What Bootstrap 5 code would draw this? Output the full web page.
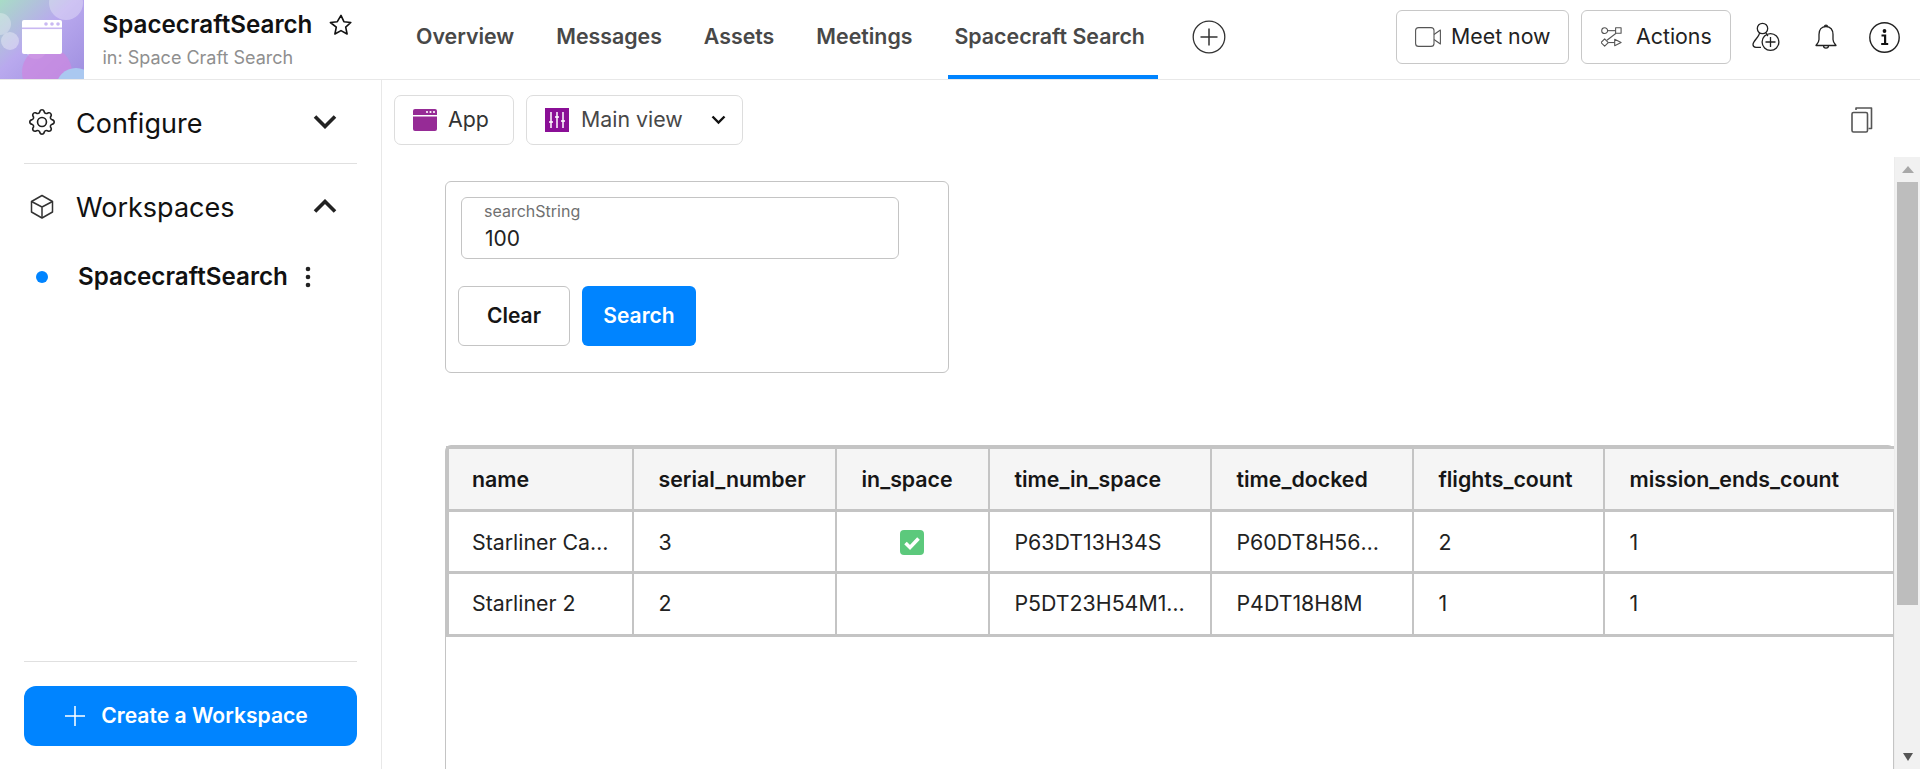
<!DOCTYPE html>
<html lang="en">
<head>
<meta charset="utf-8">
<title>SpacecraftSearch</title>
<link rel="stylesheet" href="https://cdn.jsdelivr.net/npm/bootstrap@5.3.0/dist/css/bootstrap.min.css">
<style>
html,body{height:100%;overflow:hidden}
body{font-family:Inter,"Liberation Sans",sans-serif;color:#1a1a1a;background:#fff}
svg{display:block;flex:none}
.shell{height:769px}
.topbar{height:80px;border-bottom:1px solid #e8e8e8;flex:none}
.logo-tile{width:84px;height:79px;flex:none}
.title-box{width:326px;flex:none;padding-left:18.5px;padding-top:10px}
.app-title{font-size:24.2px;font-weight:600;line-height:30px;color:#111}
.app-sub{font-size:18px;line-height:20px;color:#8f8f8f;margin-top:8px}
.star{margin-left:17px}
.tab-list{height:79px;gap:23px}
.tab-list .nav-link{height:79px;padding:1px 13px 2px 6px;display:flex;align-items:center;font-size:21.33px;font-weight:600;color:#484848;border-bottom:4px solid transparent}
.tab-list .nav-link.active{border-bottom-color:#0084ff}
.tab-plus{margin-left:11px;margin-bottom:5px}
.right-tools{padding:0 20px 5px 0}
.head-btn{height:54px;border:1px solid #c8c8c8;border-radius:6px;background:#fff;font-size:21.33px;color:#222;flex:none}
.btn-meet{width:173px;padding:0 0 0 18px;gap:10px}
.btn-actions{width:150px;margin-left:12px;padding:0 0 0 19px;gap:14px}
.tool-add{margin-left:21px}
.tool-bell{margin-left:35px}
.tool-info{margin-left:32px}
.side{width:382px;border-right:1px solid #e8e8e8;flex:none;padding:0 24px}
.side-head{height:84px;padding:0 20px 0 6px;font-size:27px;color:#111;line-height:1}
.side-head.top-one{border-bottom:1px solid #e0e0e0}
.side-label{margin-left:22px;padding-top:3px}
.gear-icon{margin:0 -1px}
.ws-row{height:56px;padding-left:12px;margin-top:1px}
.ws-dot{width:12px;height:12px;border-radius:50%;background:#0084ff;flex:none}
.ws-name{font-size:24.2px;font-weight:600;color:#111;margin-left:30px}
.ws-more{margin-left:17px}
.side-foot{border-top:1px solid #e0e0e0;padding-top:24px;padding-bottom:23px}
.create-btn{height:60px;border-radius:12px;background:#0084ff;border:0;color:#fff;font-size:21.1px;font-weight:600;gap:16px;padding:0 8px 0 0}
.work{min-width:0}
.view-bar{height:77px;padding:15px 47px 0 12px;flex:none}
.view-btn{height:50px;border:1px solid #ddd;border-radius:7px;background:#fff;font-size:21.33px;color:#484848;padding:0 0 0 18px;flex:none}
.view-app{width:120px;margin-right:12px;gap:11px}
.view-main{width:217px;gap:12px}
.view-app span{color:#333}
.view-caret{margin-left:16px}
.copy-icon{margin-top:12px;color:#555}
.canvas{min-height:0}
.pane{min-width:0;padding:24px 0 0 63px}
.form-box{width:504px;height:192px;flex:none;border:1px solid #c4c4c4;border-radius:6px;padding:15px 12px}
.field-box{width:438px;height:62px;margin-left:3px;border:1px solid #c4c4c4;border-radius:6px;padding:3px 22px}
.field-label{font-size:16px;line-height:20px;color:#707070;display:block}
.field-input{font-size:21px;line-height:28px;border:0;padding:0 0 0 1px;outline:0;width:100%;color:#222;display:block;margin-top:4px;font-family:inherit}
.form-btns{margin-top:27px;gap:12px}
.btn-clear,.btn-search{height:60px;font-size:21px;font-weight:600;border-radius:6px;padding:0}
.btn-clear{width:112px;background:#fff;border:1px solid #c4c4c4;color:#151515}
.btn-search{width:114px;background:#0084ff;border:0;color:#fff}
.grid-box{margin-top:72px;border:1px solid #c4c4c4;border-bottom:0;border-radius:6px 6px 0 0;width:1449px;height:330px;flex:none}
.data-grid{table-layout:fixed;width:1448px;margin:0;font-size:21.33px;border-collapse:collapse;color:#222}
.data-grid th,.data-grid td{height:62.5px;padding:0 20px 0 25px;border:solid #c4c4c4;border-width:3px 2px;vertical-align:middle;white-space:nowrap;overflow:hidden;text-overflow:ellipsis;box-shadow:none;background:transparent}
.data-grid th{background:#f5f5f5;font-weight:600;color:#161616;padding-top:2px}
.data-grid tbody tr:first-child td{padding-top:3px}
.data-grid tr>*:first-child{border-left-width:3px;padding-left:23px;padding-right:16px}
.data-grid tr>*:last-child{border-right-width:3px}
.data-grid td.check-cell{padding-left:22px;padding-right:23px}
.check-tile{width:24px;height:25px;margin:0 auto}
.sbar{width:26px;flex:none;background:#f1f1f1;border-left:1px solid #ececec;padding:0 2px}
.sbar-up,.sbar-down{height:25px;display:flex;align-items:center;justify-content:center}
.sbar-thumb{height:423px;background:#bdbdbd}
</style>
</head>
<body>
<div class="shell d-flex flex-column">
  <header class="topbar d-flex align-items-stretch">
    <svg class="logo-tile" viewBox="0 0 84 79" aria-label="App logo">
      <defs><linearGradient id="lg" x1="0" y1="0" x2="1" y2="1"><stop offset="0" stop-color="#a8dcc6"/><stop offset=".45" stop-color="#b9a9ee"/><stop offset="1" stop-color="#9f8fe0"/></linearGradient></defs>
      <rect width="84" height="79" fill="url(#lg)"/>
      <circle cx="66" cy="3" r="17" fill="#fff" opacity=".3"/>
      <circle cx="0" cy="24" r="11" fill="#fff" opacity=".3"/>
      <circle cx="10" cy="41" r="9" fill="#fff" opacity=".35"/>
      <circle cx="36" cy="48" r="11" fill="#fff" opacity=".3"/>
      <circle cx="47" cy="72" r="25" fill="#cc88e0" opacity=".75"/>
      <circle cx="76" cy="88" r="20" fill="#aac8f0"/>
      <rect x="22" y="20" width="40" height="34" rx="2" fill="#fff"/>
      <rect x="22" y="27.5" width="40" height="1.6" fill="#c9b8f2"/>
      <circle cx="46" cy="24" r="1.8" fill="#c9b8f2"/><circle cx="52" cy="24" r="1.8" fill="#c9b8f2"/><circle cx="58" cy="24" r="1.8" fill="#c9b8f2"/>
    </svg>
    <div class="title-box">
      <div class="d-flex align-items-center">
        <span class="app-title">SpacecraftSearch</span>
        <svg class="star" width="24" height="24" viewBox="0 0 24 24" fill="none" stroke="#111" stroke-width="1.6" stroke-linejoin="round"><path d="M12 2.4l2.9 6.3 6.9.8-5.1 4.7 1.4 6.8-6.1-3.4-6.1 3.4 1.4-6.8L1.4 9.5l6.9-.8z"/></svg>
      </div>
      <div class="app-sub">in: Space Craft Search</div>
    </div>
    <nav class="nav tab-list flex-nowrap align-items-center">
      <a class="nav-link" href="#">Overview</a>
      <a class="nav-link" href="#">Messages</a>
      <a class="nav-link" href="#">Assets</a>
      <a class="nav-link" href="#">Meetings</a>
      <a class="nav-link active" href="#">Spacecraft Search</a>
      <svg class="tab-plus" width="34" height="34" viewBox="0 0 34 34" fill="none" stroke="#333" stroke-width="1.3"><circle cx="17" cy="17" r="15.8"/><path d="M17 8.5v17M8.5 17h17" stroke-width="1.5"/></svg>
    </nav>
    <div class="right-tools ms-auto d-flex align-items-center">
      <button class="btn head-btn btn-meet d-flex align-items-center" type="button">
        <svg width="26" height="20" viewBox="0 0 26 20" fill="none" stroke="#555" stroke-width="1.1" stroke-linejoin="round"><rect x=".6" y=".6" width="18.4" height="18.8" rx="3"/><path d="M19 7.500l6.400-4.500v14l-6.400-4.500"/></svg>
        <span>Meet now</span>
      </button>
      <button class="btn head-btn btn-actions d-flex align-items-center" type="button">
        <svg width="21" height="21" viewBox="0 0 23 23" fill="none" stroke="#555" stroke-width="1.2" stroke-linejoin="round"><circle cx="4" cy="4" r="3.200"/><path d="M7.200 4H16"/><rect x="16" y=".8" width="6" height="6"/><path d="M16.500 6.800L6.500 14.500"/><path d="M4 13l4 4-4 4-4-4z"/><path d="M8 17h7"/><path d="M15 13.500l7 3.500-7 3.500z"/></svg>
        <span>Actions</span>
      </button>
      <svg class="tool-add" width="28" height="30" viewBox="0 0 28 30" fill="none" stroke="#222" stroke-width="1.3"><circle cx="10.500" cy="6.500" r="5.200"/><path d="M7.500 11c-.3 4-6.500 8-6.500 11.500 0 1.600 1.200 2.800 3 2.800h5M14 11c.5 1 1 2 2 3"/><circle cx="18.500" cy="20" r="8.400"/><path d="M18.500 15v10M13.500 20h10"/></svg>
      <svg class="tool-bell" width="22" height="28" viewBox="0 0 22 28" fill="none" stroke="#222" stroke-width="1.3" stroke-linejoin="round"><path d="M11 3.500c-4.500 0-7 3.400-7 8v5c0 2.500-2 4.500-3 6h20c-1-1.500-3-3.500-3-6v-5c0-4.600-2.500-8-7-8z"/><path d="M9.500 3.700c0-2 3-2 3 0"/><path d="M8.500 22.500c0 3.400 5 3.400 5 0"/></svg>
      <svg class="tool-info" width="31" height="31" viewBox="0 0 31 31" fill="none" stroke="#222"><circle cx="15.500" cy="15.500" r="14.700" stroke-width="1.400"/><circle cx="15.500" cy="9" r="1.900" fill="#111" stroke="none"/><path d="M12.500 13.500h3.600v8M12.200 22h7" stroke-width="2.200" stroke="#111"/></svg>
    </div>
  </header>

  <div class="d-flex flex-grow-1 overflow-hidden">
    <aside class="side d-flex flex-column">
      <div class="side-head top-one d-flex align-items-center">
        <svg class="gear-icon" width="26" height="26" viewBox="0 0 16 16" fill="#222"><path d="M8 4.754a3.246 3.246 0 1 0 0 6.492 3.246 3.246 0 0 0 0-6.492zM5.754 8a2.246 2.246 0 1 1 4.492 0 2.246 2.246 0 0 1-4.492 0z"/><path d="M9.796 1.343c-.527-1.79-3.065-1.79-3.592 0l-.094.319a.873.873 0 0 1-1.255.52l-.292-.16c-1.64-.892-3.433.902-2.54 2.541l.159.292a.873.873 0 0 1-.52 1.255l-.319.094c-1.79.527-1.79 3.065 0 3.592l.319.094a.873.873 0 0 1 .52 1.255l-.16.292c-.892 1.64.901 3.434 2.541 2.54l.292-.159a.873.873 0 0 1 1.255.52l.094.319c.527 1.79 3.065 1.79 3.592 0l.094-.319a.873.873 0 0 1 1.255-.52l.292.16c1.64.893 3.434-.902 2.54-2.541l-.159-.292a.873.873 0 0 1 .52-1.255l.319-.094c1.79-.527 1.79-3.065 0-3.592l-.319-.094a.873.873 0 0 1-.52-1.255l.16-.292c.893-1.64-.902-3.433-2.541-2.54l-.292.159a.873.873 0 0 1-1.255-.52l-.094-.319zm-2.633.283c.246-.835 1.428-.835 1.674 0l.094.319a1.873 1.873 0 0 0 2.693 1.115l.291-.16c.764-.415 1.6.42 1.184 1.185l-.159.292a1.873 1.873 0 0 0 1.116 2.692l.318.094c.835.246.835 1.428 0 1.674l-.319.094a1.873 1.873 0 0 0-1.115 2.693l.16.291c.415.764-.42 1.6-1.185 1.184l-.291-.159a1.873 1.873 0 0 0-2.693 1.116l-.094.318c-.246.835-1.428.835-1.674 0l-.094-.319a1.873 1.873 0 0 0-2.692-1.115l-.292.16c-.764.415-1.6-.42-1.184-1.185l.159-.291A1.873 1.873 0 0 0 1.945 8.93l-.319-.094c-.835-.246-.835-1.428 0-1.674l.319-.094A1.873 1.873 0 0 0 3.06 4.377l-.16-.292c-.415-.764.42-1.6 1.185-1.184l.292.159a1.873 1.873 0 0 0 2.692-1.115l.094-.319z"/></svg>
        <span class="side-label">Configure</span>
        <svg class="ms-auto" width="24" height="15" viewBox="0 0 24 15" fill="none" stroke="#222" stroke-width="3.600"><path d="M2 2.500l10 10 10-10"/></svg>
      </div>
      <div class="side-head d-flex align-items-center">
        <svg width="24" height="25" viewBox="0 0 24 25" fill="none" stroke="#333" stroke-width="1.500" stroke-linejoin="round"><path d="M12 1.500l10.500 6v10.500L12 24 1.500 18v-10.500z"/><path d="M1.500 7.500L12 13l10.500-5.500M12 13v11"/></svg>
        <span class="side-label">Workspaces</span>
        <svg class="ms-auto" width="24" height="15" viewBox="0 0 24 15" fill="none" stroke="#222" stroke-width="3.600"><path d="M2 12.500l10-10 10 10"/></svg>
      </div>
      <div class="ws-row d-flex align-items-center">
        <span class="ws-dot"></span>
        <span class="ws-name">SpacecraftSearch</span>
        <svg class="ws-more" width="6" height="22" viewBox="0 0 6 22" fill="#222"><circle cx="3" cy="3" r="2.300"/><circle cx="3" cy="11" r="2.300"/><circle cx="3" cy="19" r="2.300"/></svg>
      </div>
      <div class="side-foot mt-auto">
        <button class="btn create-btn w-100 d-flex align-items-center justify-content-center" type="button">
          <svg width="20" height="20" viewBox="0 0 20 20" stroke="#fff" stroke-width="1.500"><path d="M10 0v20M0 10h20"/></svg>
          <span>Create a Workspace</span>
        </button>
      </div>
    </aside>

    <main class="work flex-grow-1 d-flex flex-column">
      <div class="view-bar d-flex align-items-start">
        <button class="btn view-btn view-app d-flex align-items-center" type="button">
          <svg width="24" height="22" viewBox="0 0 24 22"><rect width="24" height="22" rx="2" fill="#962b96"/><rect y="6" width="24" height="1.500" fill="#fff"/><circle cx="14" cy="3" r="1.100" fill="#fff"/><circle cx="17.500" cy="3" r="1.100" fill="#fff"/><circle cx="21" cy="3" r="1.100" fill="#fff"/></svg>
          <span>App</span>
        </button>
        <button class="btn view-btn view-main d-flex align-items-center" type="button">
          <svg width="24" height="24" viewBox="0 0 24 24"><rect width="24" height="24" fill="#8a0f96"/><g stroke="#fff" stroke-width="1.500"><path d="M6 4v16M12 4v16M18 4v16"/><path d="M4 14h4M10 9h4M16 13h4"/></g></svg>
          <span>Main view</span>
          <svg class="view-caret" width="15" height="10" viewBox="0 0 15 10" fill="none" stroke="#111" stroke-width="2.400"><path d="M1.500 1.500l6 6 6-6"/></svg>
        </button>
        <svg class="copy-icon ms-auto" width="22" height="26" viewBox="0 0 22 26" fill="none" stroke="currentColor" stroke-width="1.600" stroke-linejoin="round"><rect x="1" y="5.500" width="15.500" height="19.500" rx="1.500"/><path d="M5 3V1h15.500v20.500h-3"/></svg>
      </div>
      <div class="canvas d-flex flex-grow-1">
        <div class="pane flex-grow-1 d-flex flex-column">
          <form class="form-box" onsubmit="return false">
            <label class="field-box d-block">
              <span class="field-label">searchString</span>
              <input class="field-input" type="text" value="100">
            </label>
            <div class="form-btns d-flex">
              <button class="btn btn-clear" type="button">Clear</button>
              <button class="btn btn-search" type="button">Search</button>
            </div>
          </form>
          <div class="grid-box">
            <table class="table data-grid">
              <colgroup><col style="width:185px"><col style="width:203px"><col style="width:153px"><col style="width:222px"><col style="width:202px"><col style="width:191px"><col style="width:292px"></colgroup>
              <thead><tr><th>name</th><th>serial_number</th><th>in_space</th><th>time_in_space</th><th>time_docked</th><th>flights_count</th><th>mission_ends_count</th></tr></thead>
              <tbody>
                <tr><td>Starliner Capsule</td><td>3</td><td class="check-cell"><svg class="check-tile" viewBox="0 0 24 25"><rect width="24" height="25" rx="4" fill="#5cc97c"/><path d="M5.500 13l4.500 4.500L18.500 8.500" fill="none" stroke="#fff" stroke-width="3.600"/></svg></td><td>P63DT13H34S</td><td>P60DT8H56M12S</td><td>2</td><td>1</td></tr>
                <tr><td>Starliner 2</td><td>2</td><td></td><td>P5DT23H54M12S</td><td>P4DT18H8M</td><td>1</td><td>1</td></tr>
              </tbody>
            </table>
          </div>
        </div>
        <div class="sbar d-flex flex-column">
          <div class="sbar-up"><svg width="12" height="7" viewBox="0 0 12 7" fill="#a8a8a8"><path d="M6 0l6 7H0z"/></svg></div>
          <div class="sbar-thumb"></div>
          <div class="flex-grow-1"></div>
          <div class="sbar-down"><svg width="10" height="8" viewBox="0 0 10 8" fill="#555"><path d="M0 0h10L5 8z"/></svg></div>
        </div>
      </div>
    </main>
  </div>
</div>
<script src="https://cdn.jsdelivr.net/npm/bootstrap@5.3.0/dist/js/bootstrap.bundle.min.js"></script>
</body>
</html>
